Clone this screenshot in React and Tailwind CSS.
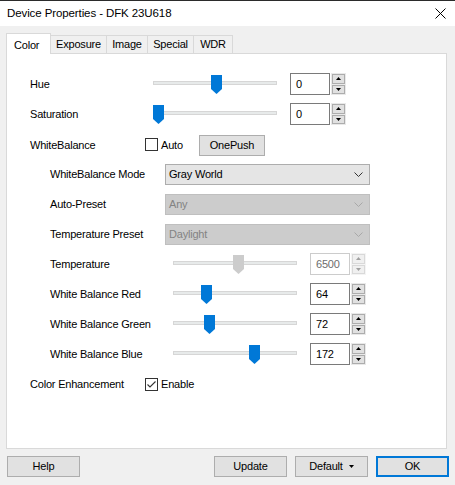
import React from "react";

// thumb of a trackbar, pos is px from the track's left end
const Thumb = ({ pos, disabled }) => (
  <svg className="absolute top-0" style={{ left: pos }} width="11" height="19" viewBox="0 0 11 19">
    <polygon points="0,0 11,0 11,14 5.5,19 0,14" fill={disabled ? "#cccccc" : "#0078d7"} />
  </svg>
);

const Slider = ({ pos, disabled }) => (
  <div className="relative w-[124px] h-[19px] shrink-0">
    <div className="absolute left-0 right-0 top-[6px] h-[4px] bg-[#e7eaea] border border-[#d6d6d6]" />
    <Thumb pos={pos} disabled={disabled} />
  </div>
);

const Arrow = ({ up, disabled }) => (
  <svg width="5" height="3" viewBox="0 0 5 3">
    <polygon points={up ? "2.5,0 5,3 0,3" : "0,0 5,0 2.5,3"} fill={disabled ? "#a0a0a0" : "#000"} />
  </svg>
);

const Spin = ({ disabled }) => (
  <div className={`flex flex-col w-[15px] h-[22px] gap-px p-px ${disabled ? "bg-[#f4f4f4]" : "bg-[#e9e9e9]"}`}>
    <div className={`flex-1 flex items-center justify-center border ${disabled ? "border-[#d9d9d9] bg-[#f0f0f0]" : "border-[#adadad] bg-[#e1e1e1]"}`}>
      <Arrow up disabled={disabled} />
    </div>
    <div className={`flex-1 flex items-center justify-center border ${disabled ? "border-[#d9d9d9] bg-[#f0f0f0]" : "border-[#adadad] bg-[#e1e1e1]"}`}>
      <Arrow disabled={disabled} />
    </div>
  </div>
);

const Edit = ({ value, disabled }) => (
  <div
    className={`w-[40px] h-[22px] bg-white flex items-center pl-[5px] pt-px border ${
      disabled ? "border-[#cccccc] text-[#6d6d6d]" : "border-[#7a7a7a] text-black"
    }`}
  >
    {value}
  </div>
);

const Check = ({ checked }) => (
  <div className="w-[13px] h-[13px] border border-[#333333] bg-white flex items-center justify-center">
    {checked && (
      <svg width="11" height="11" viewBox="0 0 11 11">
        <polyline points="1.5,5.5 4,8 9.5,2.5" fill="none" stroke="#333" strokeWidth="1.1" />
      </svg>
    )}
  </div>
);

const Combo = ({ value, disabled }) => (
  <div
    className={`w-[205px] h-[21px] flex items-center justify-between pl-[3px] pr-[6px] border ${
      disabled ? "bg-[#cccccc] border-[#bfbfbf] text-[#838383]" : "bg-[#e5e5e5] border-[#adadad] text-black"
    }`}
  >
    <span>{value}</span>
    <svg width="9" height="5" viewBox="0 0 9 5">
      <polyline points="0.5,0.5 4.5,4.5 8.5,0.5" fill="none" stroke={disabled ? "#a8a8a8" : "#333"} strokeWidth="1" />
    </svg>
  </div>
);

const Button = ({ children, primary }) => (
  <div
    className={`w-[73px] h-[21px] bg-[#e1e1e1] flex items-center justify-center ${
      primary ? "border-2 border-[#0078d7]" : "border border-[#adadad]"
    }`}
  >
    {children}
  </div>
);

const tabs = [
  { name: "Exposure", w: "w-[56px]" },
  { name: "Image", w: "w-[41px]" },
  { name: "Special", w: "w-[46px]" },
  { name: "WDR", w: "w-[39px]" },
];

const wbRows = [
  { label: "Temperature", value: "6500", pos: 60, disabled: true },
  { label: "White Balance Red", value: "64", pos: 28 },
  { label: "White Balance Green", value: "72", pos: 31 },
  { label: "White Balance Blue", value: "172", pos: 76 },
];

export default function App() {
  return (
    <div className="w-[455px] h-[485px] bg-[#f0f0f0] flex flex-col font-['Liberation_Sans',Arial,sans-serif] text-[11px] tracking-[-0.2px] text-black overflow-hidden">
      {/* Title bar */}
      <div className="h-[26px] bg-white border-t border-[#2b2b2b] flex items-center justify-between pl-[7px] pr-[9px] shrink-0">
        <span className="text-[11.5px] tracking-[-0.1px]">Device Properties - DFK 23U618</span>
        <svg width="11" height="11" viewBox="0 0 11 11">
          <path d="M0.5 0.5 L10.5 10.5 M10.5 0.5 L0.5 10.5" stroke="#000" strokeWidth="1" />
        </svg>
      </div>

      {/* Tabs */}
      <div className="mt-[7px] ml-[6px] h-[20px] flex items-end shrink-0">
        <div className="relative z-10 w-[45px] h-[21px] -mb-px bg-white border-t border-l border-r border-[#d9d9d9] pl-[7px] pt-[3px]">
          Color
        </div>
        {tabs.map((t) => (
          <div
            key={t.name}
            className={`${t.w} h-[18px] border-t border-r border-[#d9d9d9] flex items-center justify-center`}
          >
            {t.name}
          </div>
        ))}
      </div>

      {/* Panel */}
      <div className="ml-[6px] w-[441px] h-[396px] bg-white border border-[#d9d9d9] pt-[15px] pl-[23px] shrink-0">
        <div className="h-[30px] flex items-center">
          <span className="w-[123px] pt-px">Hue</span>
          <Slider pos={58} />
          <div className="ml-[13px] flex gap-px">
            <Edit value="0" />
            <Spin />
          </div>
        </div>
        <div className="h-[30px] flex items-center">
          <span className="w-[123px] pt-px">Saturation</span>
          <Slider pos={0} />
          <div className="ml-[13px] flex gap-px">
            <Edit value="0" />
            <Spin />
          </div>
        </div>
        <div className="h-[30px] flex items-center">
          <span className="w-[115px] pt-[2px]">WhiteBalance</span>
          <Check />
          <span className="ml-[3px] w-[38px] pt-[2px]">Auto</span>
          <div className="w-[66px] h-[21px] mt-[2px] bg-[#e1e1e1] border border-[#adadad] flex items-center justify-center">
            OnePush
          </div>
        </div>

        <div className="pl-[20px]">
          <div className="h-[30px] flex items-center">
            <span className="w-[115px]">WhiteBalance Mode</span>
            <Combo value="Gray World" />
          </div>
          <div className="h-[30px] flex items-center">
            <span className="w-[115px]">Auto-Preset</span>
            <Combo value="Any" disabled />
          </div>
          <div className="h-[30px] flex items-center">
            <span className="w-[115px]">Temperature Preset</span>
            <Combo value="Daylight" disabled />
          </div>
          {wbRows.map((r) => (
            <div key={r.label} className="h-[30px] flex items-center">
              <span className="w-[123px] pt-px">{r.label}</span>
              <Slider pos={r.pos} disabled={r.disabled} />
              <div className="ml-[13px] flex gap-px">
                <Edit value={r.value} disabled={r.disabled} />
                <Spin disabled={r.disabled} />
              </div>
            </div>
          ))}
        </div>

        <div className="h-[30px] flex items-center">
          <span className="w-[115px] pt-px">Color Enhancement</span>
          <Check checked />
          <span className="ml-[3px] pt-px">Enable</span>
        </div>
      </div>

      {/* Bottom buttons */}
      <div className="mt-[7px] pl-[7px] flex shrink-0">
        <Button>Help</Button>
        <div className="ml-[134px] flex gap-[8px]">
          <Button>Update</Button>
          <Button>
            <span>Default</span>
            <svg className="ml-[6px]" width="5" height="3" viewBox="0 0 5 3">
              <polygon points="0,0 5,0 2.5,3" fill="#000" />
            </svg>
          </Button>
          <Button primary>OK</Button>
        </div>
      </div>
    </div>
  );
}
